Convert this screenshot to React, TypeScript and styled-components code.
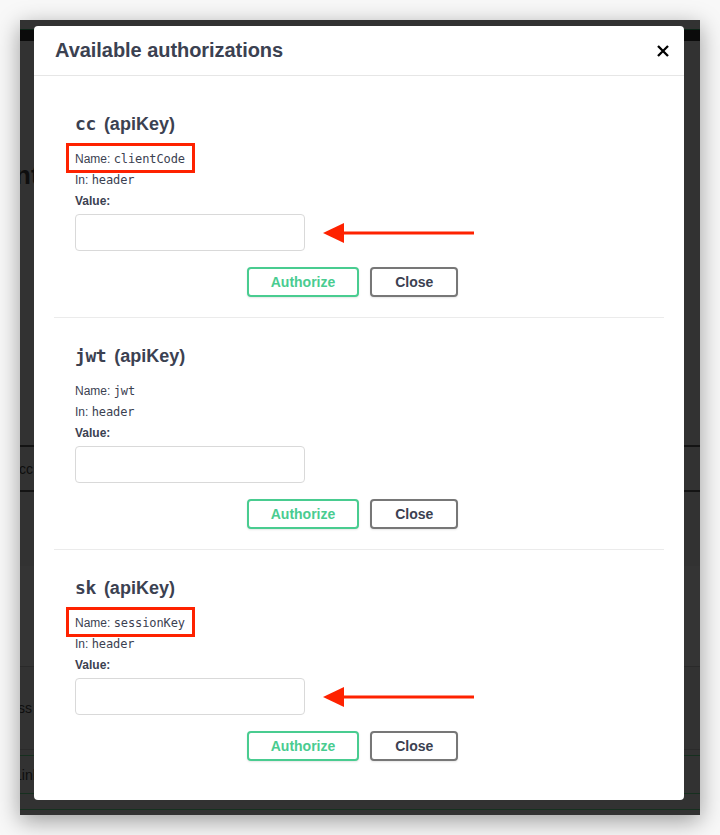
import React from "react";
import styled, { createGlobalStyle } from "styled-components";

const GlobalStyle = createGlobalStyle`
  html, body {
    margin: 0;
    padding: 0;
    background: #f8f8f8;
  }
  body {
    font-family: "Liberation Sans", Arial, Helvetica, sans-serif;
  }
  * { box-sizing: border-box; }
`;

const Stage = styled.div`
  width: 720px;
  height: 835px;
  padding: 20px;
`;

const Window = styled.div`
  position: relative;
  width: 680px;
  height: 795px;
  background: #323232;
  overflow: hidden;
  box-shadow: 0 6px 22px rgba(0, 0, 0, 0.38);
`;

/* ---------- dimmed page behind the modal ---------- */
const BgPage = styled.div`
  display: flex;
  flex-direction: column;
  width: 100%;
  height: 100%;
`;

const BgSpacer = styled.div<{ $h: number }>`
  height: ${(p) => p.$h}px;
  flex: none;
`;

const TopStrip = styled.div`
  height: 12px;
  flex: none;
  background: #0b0b0b;
  border-top: 1px solid #0d2417;
`;

const BgTitle = styled.div`
  height: 30px;
  flex: none;
  margin-left: -5px;
  font-size: 26px;
  font-weight: 700;
  line-height: 30px;
  color: #0e0e0e;
  white-space: nowrap;
`;

const BgRule = styled.div<{ $c: string; $w?: number }>`
  height: ${(p) => p.$w ?? 1}px;
  flex: none;
  background: ${(p) => p.$c};
`;

const BgText = styled.div<{ $h: number; $ml: number }>`
  height: ${(p) => p.$h}px;
  flex: none;
  margin-left: ${(p) => p.$ml}px;
  display: flex;
  align-items: center;
  font-size: 14px;
  color: #0e0e0e;
  white-space: nowrap;
`;

const BgBand = styled.div<{ $h: number }>`
  height: ${(p) => p.$h}px;
  flex: none;
  background: #343434;
`;

/* ---------- modal ---------- */
const Modal = styled.div`
  position: absolute;
  top: 6px;
  left: 14px;
  width: 650px;
  height: 774px;
  background: #fff;
  border-radius: 4px;
  display: flex;
  flex-direction: column;
`;

const ModalHeader = styled.div`
  height: 50px;
  flex: none;
  display: flex;
  align-items: center;
  justify-content: space-between;
  padding: 0 11px 0 21px;
  border-bottom: 1px solid #e6e6e6;
`;

const Title = styled.h3`
  margin: 0;
  font-size: 20px;
  font-weight: 700;
  color: #3b4151;
  letter-spacing: -0.05px;
`;

const CloseX = styled.button`
  width: 20px;
  height: 20px;
  padding: 0;
  border: none;
  background: none;
  display: flex;
  align-items: center;
  justify-content: center;
  cursor: pointer;
`;

const ModalBody = styled.div`
  padding: 20px;
  display: flex;
  flex-direction: column;
`;

const AuthSection = styled.div<{ $last?: boolean }>`
  padding: 10px 20px 10px 21px;
  margin-bottom: 10px;
  border-bottom: 1px solid ${(p) => (p.$last ? "transparent" : "#ebebeb")};
  display: flex;
  flex-direction: column;
`;

const AuthHeading = styled.h4`
  margin: 5px 0 12px;
  height: 26px;
  line-height: 26px;
  font-size: 18px;
  font-weight: 700;
  color: #3b4151;
  white-space: nowrap;
`;

const MonoBold = styled.code`
  font-family: "DejaVu Sans Mono", "Liberation Mono", monospace;
  font-size: 18px;
  font-weight: 700;
  letter-spacing: -0.4px;
  margin-right: 8px;
`;

const InfoLine = styled.div<{ $mt?: number }>`
  height: 20px;
  line-height: 20px;
  margin-top: ${(p) => p.$mt ?? 0}px;
  font-size: 12px;
  color: #3b4151;
  white-space: nowrap;
  display: flex;
`;

const InfoInner = styled.span<{ $boxed?: boolean }>`
  position: relative;
  display: inline-block;
  &::after {
    content: "";
    display: ${(p) => (p.$boxed ? "block" : "none")};
    position: absolute;
    left: -9px;
    right: -10px;
    top: -6px;
    bottom: -4px;
    border: 3px solid #fe2200;
  }
`;

const Mono = styled.code`
  font-family: "DejaVu Sans Mono", "Liberation Mono", monospace;
  font-size: 12px;
  letter-spacing: -0.1px;
`;

const ValueLabel = styled.label`
  height: 18px;
  line-height: 18px;
  margin-top: 2px;
  font-size: 12px;
  font-weight: 700;
  color: #3b4151;
`;

const InputRow = styled.div`
  margin-top: 4px;
  display: flex;
  align-items: center;
  gap: 18px;
`;

const TextInput = styled.input`
  width: 230px;
  height: 37px;
  padding: 8px 10px;
  border: 1px solid #d9d9d9;
  border-radius: 4px;
  background: #fff;
  font-size: 14px;
  outline: none;
`;

const ButtonRow = styled.div`
  display: flex;
  justify-content: center;
  gap: 11px;
  padding: 16px 14px 10px 0;
`;

const Btn = styled.button<{ $variant: "authorize" | "close" }>`
  height: 30px;
  padding: 0 22px;
  border-radius: 4px;
  background: #fff;
  font-family: "Liberation Sans", Arial, Helvetica, sans-serif;
  font-size: 14px;
  font-weight: 700;
  line-height: 25px;
  cursor: pointer;
  box-shadow: 0 1px 2px rgba(0, 0, 0, 0.1);
  border: 2px solid ${(p) => (p.$variant === "authorize" ? "#49cc90" : "#777")};
  color: ${(p) => (p.$variant === "authorize" ? "#49cc90" : "#3b4151")};
  min-width: ${(p) => (p.$variant === "authorize" ? 111 : 88)}px;
`;

const Arrow = () => (
  <svg width="151" height="22" viewBox="0 0 151 22">
    <path d="M0 11 L21 1 L21 21 Z" fill="#fe2200" />
    <rect x="18" y="9.5" width="133" height="3" fill="#fe2200" />
  </svg>
);

const XIcon = () => (
  <svg width="12" height="12" viewBox="0 0 12 12">
    <path d="M1.8 1.8 L10.2 10.2 M10.2 1.8 L1.8 10.2" stroke="#000" strokeWidth="2.3" strokeLinecap="square" />
  </svg>
);

type Auth = { key: string; name: string; boxed: boolean; arrow: boolean };

const auths: Auth[] = [
  { key: "cc", name: "clientCode", boxed: true, arrow: true },
  { key: "jwt", name: "jwt", boxed: false, arrow: false },
  { key: "sk", name: "sessionKey", boxed: true, arrow: true },
];

export default function App() {
  return (
    <>
      <GlobalStyle />
      <Stage>
        <Window>
          <BgPage>
            <BgSpacer $h={9} />
            <TopStrip />
            <BgSpacer $h={119} />
            <BgTitle>nt</BgTitle>
            <BgSpacer $h={255} />
            <BgRule $c="#141414" $w={2} />
            <BgText $h={43} $ml={-1}>cc</BgText>
            <BgRule $c="#141414" $w={2} />
            <BgSpacer $h={74} />
            <BgBand $h={100} />
            <BgRule $c="#2a2a2a" />
            <BgText $h={82} $ml={-2}>ss</BgText>
            <BgRule $c="#2b2b2b" />
            <BgSpacer $h={5} />
            <BgRule $c="#16301f" />
            <BgText $h={37} $ml={-6}>Link</BgText>
            <BgRule $c="#16301f" />
            <BgSpacer $h={15} />
            <BgRule $c="#16301f" />
          </BgPage>

          <Modal>
            <ModalHeader>
              <Title>Available authorizations</Title>
              <CloseX aria-label="close">
                <XIcon />
              </CloseX>
            </ModalHeader>
            <ModalBody>
              {auths.map((a, i) => (
                <AuthSection key={a.key} $last={i === auths.length - 1}>
                  <AuthHeading>
                    <MonoBold>{a.key}</MonoBold>(apiKey)
                  </AuthHeading>
                  <InfoLine>
                    <InfoInner $boxed={a.boxed}>
                      Name: <Mono>{a.name}</Mono>
                    </InfoInner>
                  </InfoLine>
                  <InfoLine $mt={1}>
                    <InfoInner>
                      In: <Mono>header</Mono>
                    </InfoInner>
                  </InfoLine>
                  <ValueLabel>Value:</ValueLabel>
                  <InputRow>
                    <TextInput type="text" />
                    {a.arrow && <Arrow />}
                  </InputRow>
                  <ButtonRow>
                    <Btn $variant="authorize">Authorize</Btn>
                    <Btn $variant="close">Close</Btn>
                  </ButtonRow>
                </AuthSection>
              ))}
            </ModalBody>
          </Modal>
        </Window>
      </Stage>
    </>
  );
}
